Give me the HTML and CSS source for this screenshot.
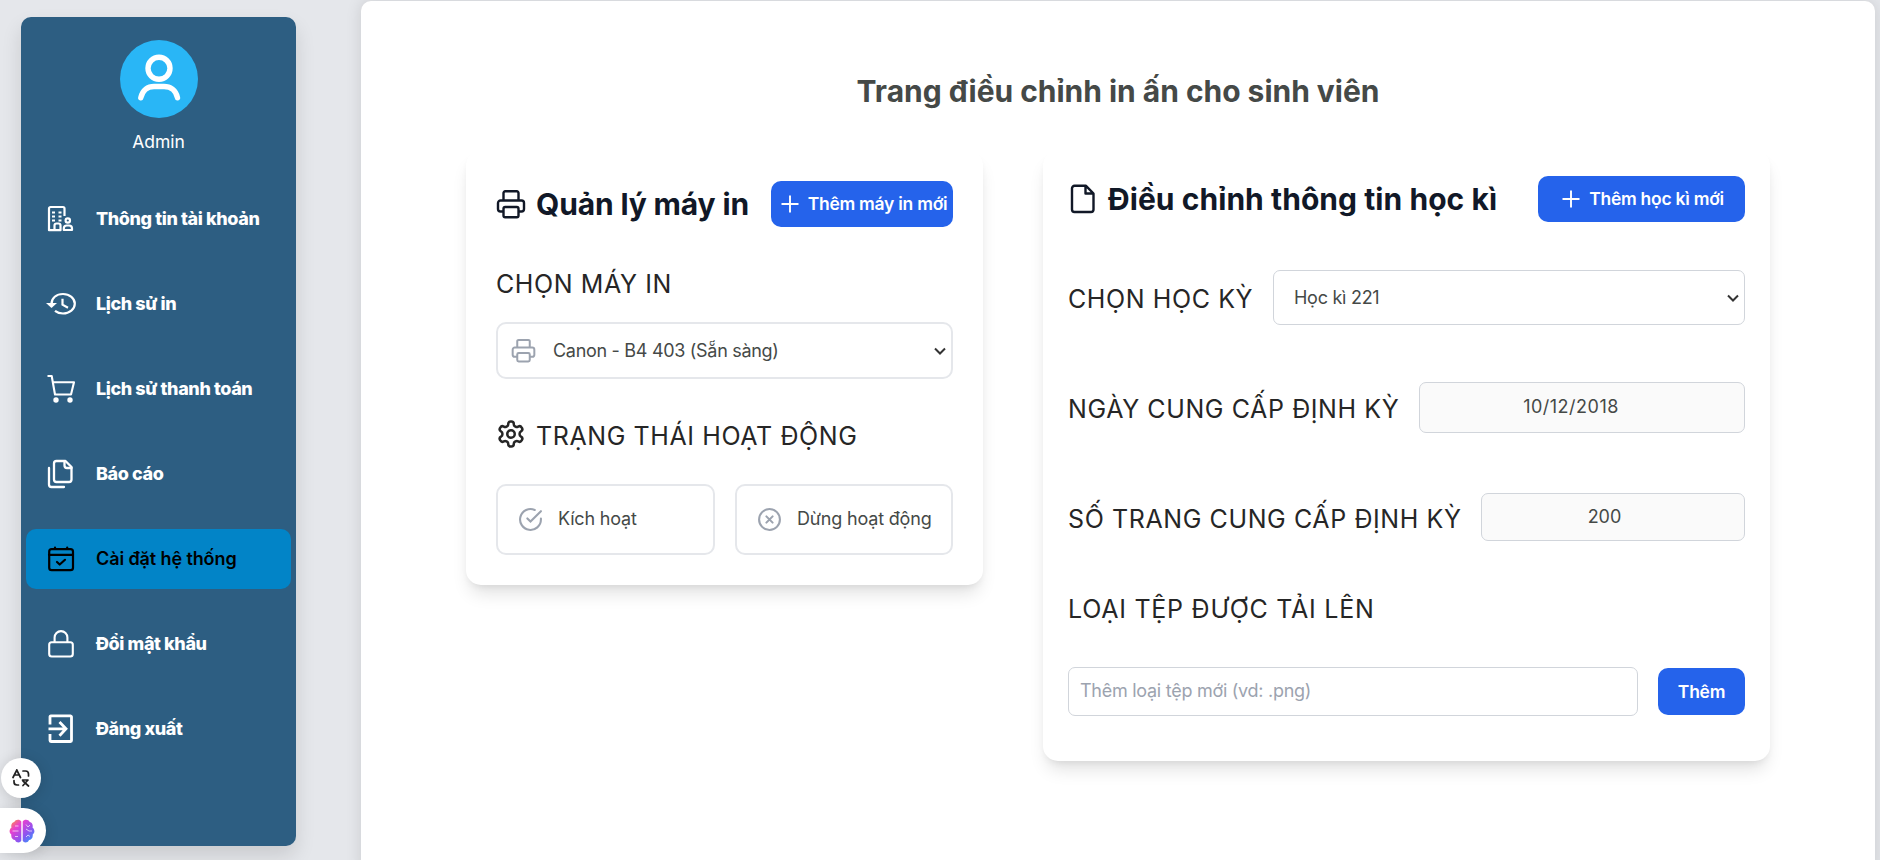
FILE: index.html
```html
<!DOCTYPE html>
<html lang="vi">
<head>
<meta charset="utf-8">
<title>Trang điều chỉnh in ấn</title>
<link rel="stylesheet" href="styles.css">
</head>
<body>
<aside class="sidebar">
  <div class="avatar"><svg viewBox="0 0 78 78" width="78" height="78"><g fill="none" stroke="#fff" stroke-width="5.4" stroke-linecap="round"><circle cx="39" cy="28.3" r="11"/><path d="M20.8 57.800C22.500 50 28 46.500 34 46.500H44C50 46.500 56 50 57.500 57.800"/></g></svg></div>
  <div class="user-name">Admin</div>
  <nav class="nav">
    <a class="nav-item"><svg class="ic" viewBox="0 0 30 30"><g fill="none" stroke="currentColor" stroke-width="2.200" stroke-linejoin="round"><path d="M18.500 12V4.500a1.500 1.500 0 0 0-1.500-1.500H4.500A1.500 1.500 0 0 0 3 4.500V26.200H14.500V21.500a2 2 0 0 0-2-2h-2a2 2 0 0 0-2 2V26.200"/><circle cx="21.800" cy="16.500" r="2.200"/><path d="M17.800 26h8.200v-1.500a3 3 0 0 0-3-3h-2.200a3 3 0 0 0-3 3z"/></g><path d="M6 7.500h3v2H6zM12.500 7.500h3v2h-3zM6 11.500h3v2H6zM12.500 11.500h3v2h-3zM6 15.500h3v2H6zM12.500 15.500h3v2h-3z" fill="currentColor"/></svg><span>Thông tin tài khoản</span></a>
    <a class="nav-item"><svg class="ic" viewBox="0 0 30 30"><g fill="none" stroke="currentColor" stroke-width="2.200"><path d="M5.500 15C5.500 9 10.300 5 17 5S28.800 9.300 28.800 14.700 23.500 24.500 17 24.500c-3.200 0-5.800-.9-8-2.700"/><path d="M16.500 9.700v6l5.500 3"/></g><path d="M0 14h11L5.500 19z" fill="currentColor"/></svg><span>Lịch sử in</span></a>
    <a class="nav-item"><svg class="ic" viewBox="0 0 30 30"><path d="M1.500 2H5.700L9 20.500H25L28 8.200H6.800" fill="none" stroke="currentColor" stroke-width="2.100" stroke-linejoin="round"/><circle cx="10" cy="26" r="2.700" fill="currentColor"/><circle cx="24" cy="26" r="2.700" fill="currentColor"/></svg><span>Lịch sử thanh toán</span></a>
    <a class="nav-item"><svg class="ic" viewBox="0 0 30 30"><g fill="none" stroke="currentColor" stroke-width="2.300" stroke-linejoin="round" stroke-linecap="round"><path d="M10.500 2H19.500L25.500 8V20.500a2.500 2.500 0 0 1-2.500 2.500H10.500A2.500 2.500 0 0 1 8 20.500V4.500a2.500 2.500 0 0 1 2.500-2.500z"/><path d="M18.500 2.500V6.500a2.500 2.500 0 0 0 2.500 2.500H25.500"/><path d="M3 9V25.500A2.500 2.500 0 0 0 5.500 28H18"/></g></svg><span>Báo cáo</span></a>
    <a class="nav-item active"><svg class="ic" viewBox="0 0 30 30"><g fill="none" stroke="currentColor" stroke-width="2.200" stroke-linejoin="round" stroke-linecap="round"><rect x="3.200" y="5.200" width="23.800" height="21" rx="2.500"/><path d="M3 10.800H27M9 3.500V5M21.200 3.500V5M11 18L13.700 20.500 19 15.800"/></g></svg><span>Cài đặt hệ thống</span></a>
    <a class="nav-item"><svg class="ic" viewBox="0 0 30 30"><g fill="none" stroke="currentColor" stroke-width="2.100"><rect x="3.200" y="13.300" width="23.600" height="14.200" rx="2.500"/><path d="M8.600 13.300V8.500a6.400 6.400 0 0 1 12.800 0v4.800"/></g></svg><span>Đổi mật khẩu</span></a>
    <a class="nav-item"><svg class="ic" viewBox="0 0 30 30"><g fill="none" stroke="currentColor" stroke-width="2.800"><path d="M4 10.500V3A1 1 0 0 1 5 1.800H24.500a1.200 1.200 0 0 1 1 1V26.500a1 1 0 0 1-1 1H5a1 1 0 0 1-1-1V20"/><path d="M2.500 14.800H19M13.500 8L20 14.800l-6.500 6.900"/></g></svg><span>Đăng xuất</span></a>
  </nav>
</aside>

<main class="main">
  <h1 class="title"><span>Trang điều chỉnh in ấn cho sinh viên</span></h1>
  <div class="cards">
    <section class="card card-printer">
      <header class="card-head">
        <svg class="head-ic" viewBox="0 0 30 30"><use href="#printer"/></svg>
        <h2><span>Quản lý máy in</span></h2>
        <button class="btn btn-printer"><svg class="plus" viewBox="0 0 18 18"><path d="M9 .5v17M.5 9h17"/></svg><span>Thêm máy in mới</span></button>
      </header>
      <h3 class="label label-printer"><span>CHỌN MÁY IN</span></h3>
      <div class="select select-printer">
        <svg class="field-ic" viewBox="0 0 30 30"><use href="#printer"/></svg>
        <span>Canon - B4 403 (Sẵn sàng)</span>
        <svg class="caret" viewBox="0 0 12 8"><path d="M1 1.500L6 6.500 11 1.500"/></svg>
      </div>
      <h3 class="label label-status"><svg class="gear" viewBox="0 0 24 24"><path d="M12.220 2h-.44a2 2 0 0 0-2 2v.18a2 2 0 0 1-1 1.730l-.43.25a2 2 0 0 1-2 0l-.15-.08a2 2 0 0 0-2.730.73l-.22.38a2 2 0 0 0 .73 2.730l.15.1a2 2 0 0 1 1 1.720v.51a2 2 0 0 1-1 1.740l-.15.09a2 2 0 0 0-.73 2.730l.22.38a2 2 0 0 0 2.730.73l.15-.08a2 2 0 0 1 2 0l.43.25a2 2 0 0 1 1 1.730V20a2 2 0 0 0 2 2h.44a2 2 0 0 0 2-2v-.18a2 2 0 0 1 1-1.730l.43-.25a2 2 0 0 1 2 0l.15.08a2 2 0 0 0 2.730-.73l.22-.39a2 2 0 0 0-.73-2.730l-.15-.08a2 2 0 0 1-1-1.740v-.5a2 2 0 0 1 1-1.740l.15-.09a2 2 0 0 0 .73-2.730l-.22-.38a2 2 0 0 0-2.730-.73l-.15.08a2 2 0 0 1-2 0l-.43-.25a2 2 0 0 1-1-1.730V4a2 2 0 0 0-2-2z"/><circle cx="12" cy="12" r="3"/></svg><span>TRẠNG THÁI HOẠT ĐỘNG</span></h3>
      <div class="status">
        <div class="option"><svg viewBox="0 0 24 24"><path d="M22 11.080V12a10 10 0 1 1-5.930-9.140M22 4 12 14.010l-3-3"/></svg><span>Kích hoạt</span></div>
        <div class="option"><svg viewBox="0 0 24 24"><circle cx="12" cy="12" r="10"/><path d="M15 9l-6 6M9 9l6 6"/></svg><span>Dừng hoạt động</span></div>
      </div>
    </section>

    <section class="card card-term">
      <header class="card-head">
        <svg class="head-ic" viewBox="0 0 30 30"><path d="M6.500 1.800H18L25.500 9.500V25.500A2.500 2.500 0 0 1 23 28H6.500A2.500 2.500 0 0 1 4 25.500V4.300A2.500 2.500 0 0 1 6.500 1.800zM17.500 2V9.500H25"/></svg>
        <h2><span>Điều chỉnh thông tin học kì</span></h2>
        <button class="btn btn-term"><svg class="plus" viewBox="0 0 18 18"><path d="M9 .5v17M.5 9h17"/></svg><span>Thêm học kì mới</span></button>
      </header>
      <div class="row row-term"><h3 class="label"><span>CHỌN HỌC KỲ</span></h3><div class="select select-term"><span>Học kì 221</span><svg class="caret" viewBox="0 0 12 8"><path d="M1 1.500L6 6.500 11 1.500"/></svg></div></div>
      <div class="row row-date"><h3 class="label"><span>NGÀY CUNG CẤP ĐỊNH KỲ</span></h3><div class="field field-date"><span>10/12/2018</span></div></div>
      <div class="row row-pages"><h3 class="label"><span>SỐ TRANG CUNG CẤP ĐỊNH KỲ</span></h3><div class="field field-pages"><span>200</span></div></div>
      <h3 class="label label-types"><span>LOẠI TỆP ĐƯỢC TẢI LÊN</span></h3>
      <div class="row row-add"><div class="input"><span>Thêm loại tệp mới (vd: .png)</span></div><button class="btn btn-add"><span>Thêm</span></button></div>
    </section>
  </div>
</main>

<div class="float translate"><svg viewBox="0 0 18 18" width="18" height="18"><g fill="none" stroke="#222" stroke-width="1.700" stroke-linecap="round"><path d="M1 8.500L4.800 1 8.500 8.500M2.500 6h4.600M11 2h2.500A3 3 0 0 1 16.500 5v2M2 11.500v1.500a3 3 0 0 0 3 3h1.500M10.500 11h5.500M11 16.500L15.500 11.500M11 12l5.500 5"/></g></svg></div>
<div class="float brain"><svg viewBox="0 0 26 24" width="26" height="24"><defs><linearGradient id="bg" x1="0" y1="0" x2="1" y2="1"><stop offset="0" stop-color="#ff9d2e"/><stop offset=".3" stop-color="#e83fd0"/><stop offset=".65" stop-color="#8b55f0"/><stop offset="1" stop-color="#1fa5ff"/></linearGradient></defs><path fill="url(#bg)" d="M12.300 2.500C11 0 6.500 0 5.300 3 2.500 3.500 1.800 6.500 2.500 8.500 0 10.500 0 14 2.300 15.500 1.800 19 4 21 6 21 7.500 24.500 11.500 24 12.300 21.500zM13.700 2.500C15 0 19.500 0 20.700 3 23.500 3.500 24.200 6.500 23.500 8.500 26 10.500 26 14 23.700 15.500 24.200 19 22 21 20 21 18.500 24.500 14.500 24 13.700 21.500z"/><path d="M3.500 12H9.500M6 7h3.500M6 17.500h3M17 5.500l2 2.500 2-2M17 10l3 2h3M17 18l2-2 2 1.500" fill="none" stroke="#fff" stroke-opacity=".65" stroke-width="1"/></svg></div>

<svg width="0" height="0" class="defs"><symbol id="printer" viewBox="0 0 30 30"><g stroke-linejoin="round"><path d="M7.500 11.500V4A1.700 1.700 0 0 1 9.200 2.300H20.800A1.700 1.700 0 0 1 22.500 4v7.500M7.500 22.500H4.500A2.500 2.500 0 0 1 2 20V14a2.500 2.500 0 0 1 2.500-2.500h21A2.500 2.500 0 0 1 28 14v6a2.500 2.500 0 0 1-2.500 2.500H22.500"/><rect x="7.500" y="18" width="15" height="10.200" rx="1.700"/></g></symbol></svg>
</body>
</html>
```

FILE: styles.css
```css
* { box-sizing: border-box; }
body {
  margin: 0;
  width: 1880px;
  height: 860px;
  overflow: hidden;
  display: flex;
  align-items: flex-start;
  background: #e5e7eb;
  font-family: Inter, "Noto Sans", sans-serif;
  font-size: 18px;
  color: #454947;
}
h1, h2, h3 { margin: 0; white-space: nowrap; }
span { white-space: nowrap; }
svg { flex: none; display: block; }
.defs { display: none; }

.sidebar {
  flex: none;
  width: 275px;
  height: 829px;
  margin: 17px 65px 0 21px;
  padding: 22.500px 5px 0;
  background: #2d5e82;
  border-radius: 10px;
  box-shadow: 0 10px 20px rgba(0, 0, 0, .12);
}
.avatar { width: 78px; height: 78px; margin: 0 auto; border-radius: 50%; background: #29b6f6; }
.user-name { margin-top: 11.500px; height: 26px; line-height: 26px; text-align: center; color: #fff; font-size: 17.500px; }
.nav { display: flex; flex-direction: column; gap: 25px; margin-top: 34px; }
.nav-item {
  display: flex;
  align-items: center;
  gap: 20px;
  height: 60px;
  padding-left: 20px;
  border-radius: 10px;
  color: #fff;
  font-weight: 800;
  letter-spacing: -.4px;
}
.nav-item .ic { width: 30px; height: 30px; }
.nav-item span { padding-bottom: 2px; }
.nav-item.active { background: #0284c7; color: #000; font-weight: 600; letter-spacing: -.1px; }

.main {
  flex: none;
  width: 1514px;
  height: 870px;
  margin-top: 1px;
  background: #fff;
  border-radius: 10px 10px 0 0;
  box-shadow: 0 0 16px rgba(0, 0, 0, .12);
}
.title { height: 150px; padding-top: 70px; line-height: 40px; text-align: center; font-size: 30px; font-weight: 700; color: #454947; letter-spacing: -.03px; }
.cards { display: flex; align-items: flex-start; gap: 60px; padding-left: 105px; }
.card { border-radius: 15px; box-shadow: 0 12px 18px -4px rgba(0, 0, 0, .12), 0 4px 8px -4px rgba(0, 0, 0, .1); }
.card-printer { width: 517px; height: 434px; padding: 30px; }
.card-term { width: 727px; height: 610px; padding: 25px; }
.card-head { display: flex; align-items: center; height: 46px; color: #111827; }
.card-head h2 { flex: 1; font-size: 30px; font-weight: 700; margin-left: 10px; letter-spacing: -.15px; }
.card-term .card-head h2 { letter-spacing: .06px; }
.head-ic { width: 30px; height: 30px; fill: none; stroke: #111827; stroke-width: 2.400; stroke-linejoin: round; }
.btn {
  display: flex;
  align-items: center;
  justify-content: center;
  height: 46px;
  padding: 0 0 1px;
  border: 0;
  border-radius: 10px;
  background: #2563eb;
  color: #fff;
  font: 600 17.500px Inter, "Noto Sans", sans-serif;
  letter-spacing: -.27px;
}
.plus { width: 18px; height: 18px; margin-right: 9px; fill: none; stroke: #fff; stroke-width: 1.900; }
.btn-printer { width: 182px; padding-left: 4px; }
.btn-term { width: 207px; padding-left: 3px; }
.label { font-size: 25px; font-weight: 400; color: #262626; letter-spacing: .6px; line-height: 36px; }
.label-printer { margin-top: 39px; }
.select { display: flex; align-items: center; background: #fff; }
.select span { flex: 1; }
.select-printer { height: 57px; margin-top: 20px; border: 2px solid #e5e7eb; border-radius: 10px; padding: 0 5px 0 13px; letter-spacing: -.3px; }
.field-ic { width: 25px; height: 25px; margin-right: 17px; fill: none; stroke: #9ca3af; stroke-width: 2.400; }
.caret { width: 12px; height: 8px; fill: none; stroke: #333; stroke-width: 2; }
.label-status { display: flex; align-items: center; margin-top: 39px; }
.gear { width: 30px; height: 30px; margin: -4px 10px 0 0; fill: none; stroke: #262626; stroke-width: 2; }
.status { display: grid; grid-template-columns: 219px 218px; gap: 20px; margin-top: 30px; }
.option { display: flex; align-items: center; gap: 15px; height: 71px; padding-left: 20px; border: 2px solid #e5e7eb; border-radius: 10px; letter-spacing: -.18px; }
.option span { padding-bottom: 2px; }
.option svg { width: 25px; height: 25px; fill: none; stroke: #9ca3af; stroke-width: 2; stroke-linecap: round; }

.row { display: flex; align-items: center; justify-content: space-between; }
.row .label { padding-top: 3px; }
.row-term { margin-top: 48px; height: 55px; }
.select-term { width: 472px; height: 55px; padding: 0 5px 0 20px; border: 1px solid #d1d5db; border-radius: 7px; letter-spacing: -.27px; }
.row-date { margin-top: 57px; height: 51px; }
.field, .input { border: 1px solid #d1d5db; border-radius: 7px; display: flex; align-items: center; }
.field { background: #fafafa; justify-content: center; padding-right: 18px; }
.field-date { width: 326px; height: 51px; padding: 0 22px 2px 0; letter-spacing: .5px; }
.row-pages { margin-top: 60px; height: 48px; }
.field-pages { width: 264px; height: 48px; padding: 0 17px 1px 0; }
.row-pages .label { padding-top: 4px; }
.label-types { margin-top: 50px; }
.label-types span { letter-spacing: .75px; }
.row-add { margin-top: 40px; height: 49px; }
.input { width: 570px; height: 49px; padding: 0 0 2px 11px; color: #9ca3af; letter-spacing: -.27px; }
.btn-add { width: 87px; height: 47px; }

.float { position: absolute; left: 0; background: #fff; box-shadow: 0 2px 14px rgba(0, 0, 0, .15); display: flex; align-items: center; justify-content: center; }
.translate { left: 1px; top: 758px; width: 40px; height: 40px; border-radius: 50%; }
.brain { top: 808px; width: 46px; height: 45px; border-radius: 0 23px 23px 0; padding-right: 3px; }
```
